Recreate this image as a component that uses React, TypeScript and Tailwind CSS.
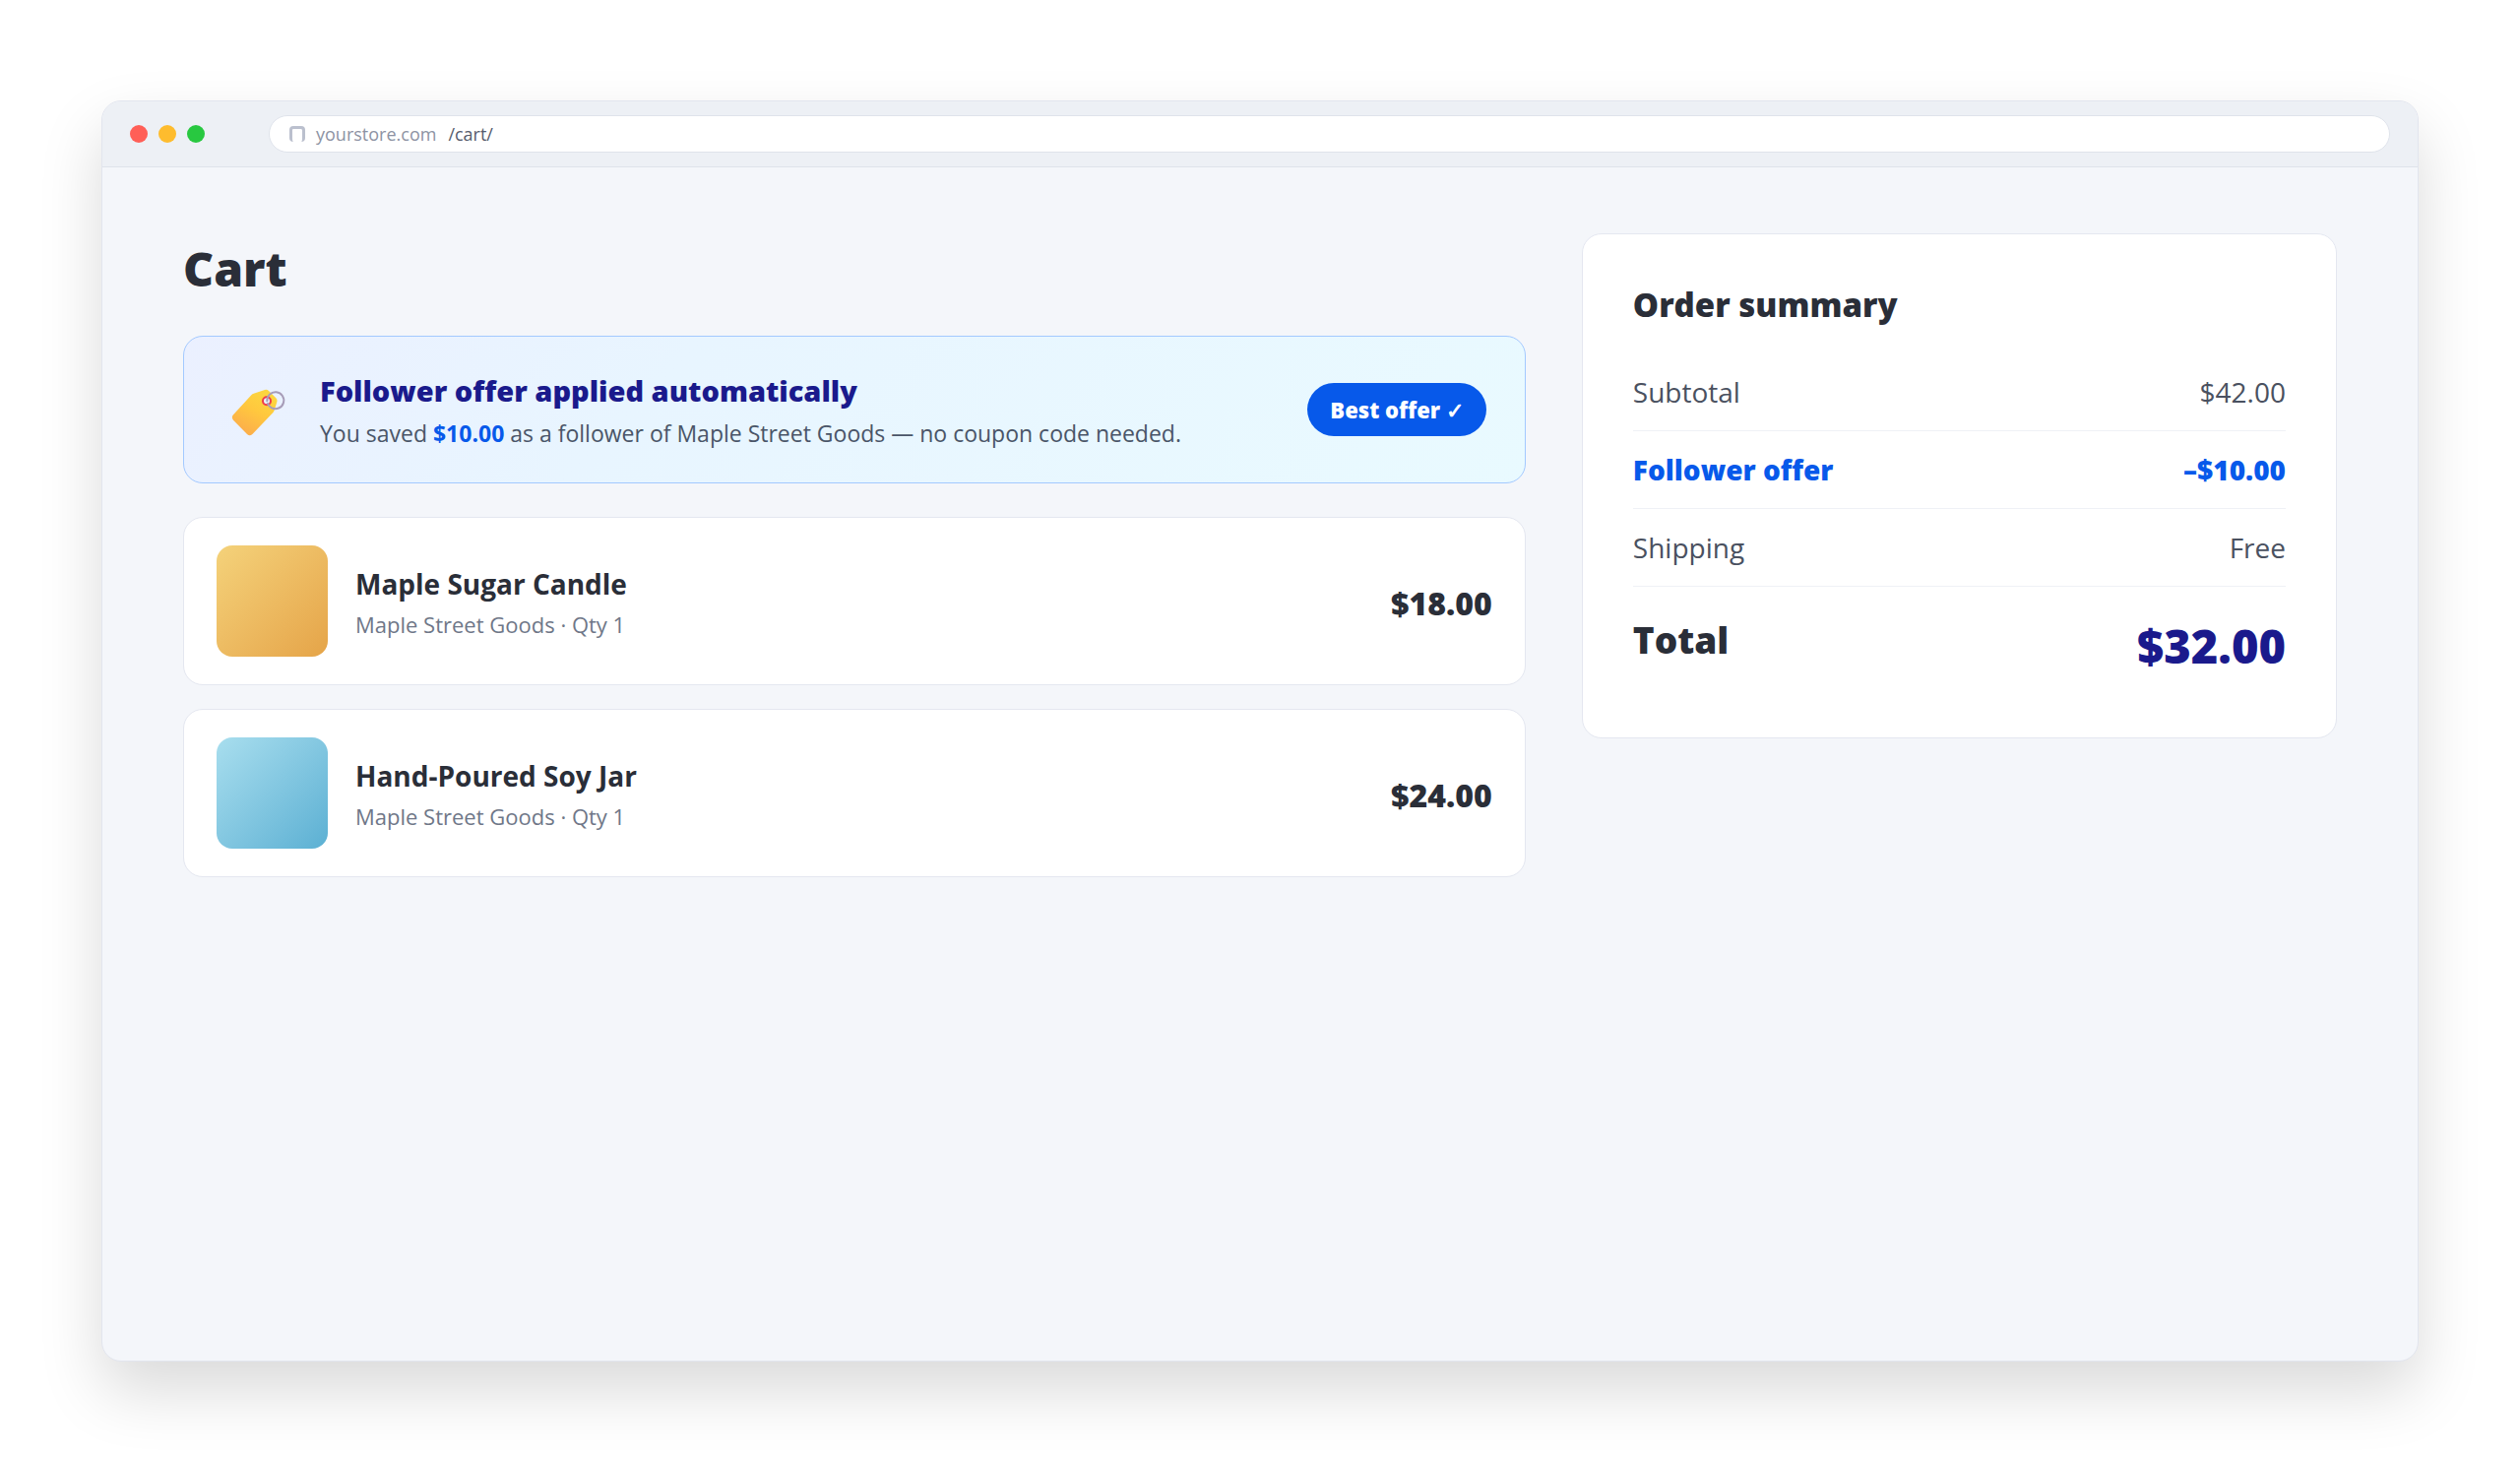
import clsx from "clsx";

interface CartItem {
  name: string;
  shop: string;
  qty: number;
  price: string;
  thumb: string;
}

interface SummaryRow {
  label: string;
  value: string;
  highlight?: boolean;
}

const items: CartItem[] = [
  {
    name: "Maple Sugar Candle",
    shop: "Maple Street Goods",
    qty: 1,
    price: "$18.00",
    thumb: "from-[#f4d27a] to-[#e5a448]",
  },
  {
    name: "Hand-Poured Soy Jar",
    shop: "Maple Street Goods",
    qty: 1,
    price: "$24.00",
    thumb: "from-[#a8deee] to-[#5bb0d3]",
  },
];

const summary: SummaryRow[] = [
  { label: "Subtotal", value: "$42.00" },
  { label: "Follower offer", value: "–$10.00", highlight: true },
  { label: "Shipping", value: "Free" },
];

function TagIcon() {
  return (
    <svg viewBox="36 15 180 180" className="size-[60px] shrink-0" aria-hidden="true">
      <defs>
        <linearGradient id="tag" x1="0.75" y1="0.1" x2="0.3" y2="0.9">
          <stop offset="0" stopColor="#fcd53f" />
          <stop offset="0.45" stopColor="#ffc83e" />
          <stop offset="1" stopColor="#fcb04a" />
        </linearGradient>
      </defs>
      <path
        d="M113 56 L147 45 Q154 43 159 48 L181 70 Q186 75 184 82 L177 105 Q176 109 173 113 L110 179 Q102 188 93 180 L51 137 Q44 129 51 121 L106 61 Q109 57 113 56Z"
        fill="url(#tag)"
      />
      <circle cx="153" cy="79" r="12" fill="#e8f2fd" stroke="#ef3b4b" strokeWidth="6" />
      <path
        d="M154 79 A25.500 25.500 0 1 1 168 100 Q160 96 156 87"
        fill="none"
        stroke="#a79cb8"
        strokeWidth="6"
        strokeLinecap="round"
      />
    </svg>
  );
}

function BrowserBar() {
  return (
    <header className="flex items-center border-b border-[#dfe3eb] bg-[#edf0f5] px-7 py-3.5">
      <div className="flex gap-[11px]">
        <span className="size-[18px] rounded-full bg-[#ff5f57]" />
        <span className="size-[18px] rounded-full bg-[#febc2e]" />
        <span className="size-[18px] rounded-full bg-[#28c840]" />
      </div>
      <div className="ml-[65px] flex h-[38px] flex-1 items-center rounded-full border border-[#dfe3eb] bg-white pl-5 text-[18px]">
        <span className="size-4 rounded-sm border-[3px] border-b-0 border-[#bbc0ce]" />
        <span className="ml-[11px] pt-px text-[#8d93a3]">yourstore.com</span>
        <span className="ml-3 pt-px text-[#565c6d]">/cart/</span>
      </div>
    </header>
  );
}

function OfferBanner() {
  return (
    <section className="flex h-[150px] items-center rounded-[20px] border border-[#a3c9ff] bg-linear-135 from-[#ebf0ff] via-[#e8f5ff] via-35% to-[#e9faff] pr-[39px] pl-[45px]">
      <TagIcon />
      <div className="ml-[33px] flex flex-1 flex-col gap-1">
        <h2 className="text-[29px] leading-[44px] font-extrabold text-[#1a1a8c]">
          Follower offer applied automatically
        </h2>
        <p className="text-[23px] leading-[34px] text-[#4a5568]">
          You saved <strong className="font-bold text-[#0759ea]">$10.00</strong> as a follower of
          Maple Street Goods — no coupon code needed.
        </p>
      </div>
      <span className="rounded-full bg-[#0759ea] px-[23px] text-[22px] leading-[54px] font-extrabold text-white">
        Best offer ✓
      </span>
    </section>
  );
}

function ItemCard({ item }: { item: CartItem }) {
  return (
    <li className="flex items-center rounded-[20px] border border-[#e4e7f0] bg-white px-[33px] py-7">
      <div className={clsx("size-[113px] shrink-0 rounded-2xl bg-linear-135", item.thumb)} />
      <div className="ml-7 flex flex-1 flex-col gap-1">
        <h3 className="text-[28px] leading-[42px] font-bold text-[#2a2e38]">{item.name}</h3>
        <p className="text-[22px] leading-[32px] text-[#6f7788]">
          {item.shop} · Qty {item.qty}
        </p>
      </div>
      <span className="pt-1 text-[32px] font-extrabold text-[#2a2e38]">{item.price}</span>
    </li>
  );
}

function OrderSummary() {
  return (
    <aside className="rounded-[20px] border border-[#e4e7f0] bg-white p-[51px]">
      <h2 className="mb-7 text-[33px] leading-[42px] font-extrabold text-[#2a2e38]">
        Order summary
      </h2>
      <dl>
        {summary.map((row) => (
          <div
            key={row.label}
            className={clsx(
              "flex justify-between border-b border-[#eff1f6] py-5 text-[28px] leading-[38px]",
              row.highlight ? "font-extrabold text-[#0759ea]" : "text-[#4a5160]"
            )}
          >
            <dt>{row.label}</dt>
            <dd>{row.value}</dd>
          </div>
        ))}
        <div className="flex items-start justify-between pt-[30px] pb-3 font-extrabold">
          <dt className="text-[37px] leading-[48px] text-[#2a2e38]">Total</dt>
          <dd className="text-[47px] leading-[60px] text-[#1a1a8c]">$32.00</dd>
        </div>
      </dl>
    </aside>
  );
}

export default function App() {
  return (
    <div className="flex min-h-screen bg-white px-[103px] pt-[102px] pb-[102px] font-['Open_Sans','Noto_Sans',sans-serif]">
      <div className="flex flex-1 flex-col overflow-hidden rounded-[20px] border border-[#e2e5ee] bg-[#f4f6fa] shadow-[0_30px_64px_rgba(0,0,0,0.15)]">
        <BrowserBar />
        <main className="grid grid-cols-[16fr_9fr] items-start gap-[57px] px-[82px] pt-[67px] pb-20">
          <div>
            <h1 className="mb-8 text-[48px] leading-[72px] font-extrabold text-[#2a2e38]">Cart</h1>
            <OfferBanner />
            <ul className="mt-[34px] flex flex-col gap-6">
              {items.map((item) => (
                <ItemCard key={item.name} item={item} />
              ))}
            </ul>
          </div>
          <OrderSummary />
        </main>
      </div>
    </div>
  );
}
